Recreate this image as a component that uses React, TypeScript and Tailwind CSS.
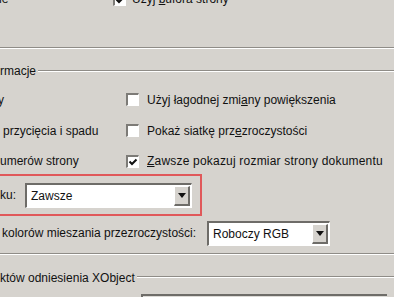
function Checkbox({ checked = false }: { checked?: boolean }) {
  return (
    <span className="relative flex h-[13px] w-[13px] shrink-0 border-t-[2px] border-l-[2px] border-b border-r border-t-[#7d7b77] border-l-[#7d7b77] border-b-white border-r-white bg-white">
      {checked && (
        <svg viewBox="0 0 10 10" className="absolute left-[0px] top-[0px] h-[10px] w-[10px]">
          <path d="M1.5 4.5 L4 7 L8.5 2.5" fill="none" stroke="#111" strokeWidth="2" />
        </svg>
      )}
    </span>
  );
}

function Select({ value, width }: { value: string; width: string }) {
  return (
    <div className={`flex h-[25px] ${width} shrink-0 items-stretch border-t-[2px] border-l-[2px] border-b border-r border-t-[#6e6c68] border-l-[#6e6c68] border-b-white border-r-white bg-white`}>
      <span className="flex flex-1 items-center pl-[4px] text-[12px] text-[#111]">{value}</span>
      <span className="my-[1px] mr-[1px] flex w-[16px] items-center justify-center border-t border-l border-b-[2px] border-r-[2px] border-t-white border-l-white border-b-[#6e6c68] border-r-[#6e6c68] bg-[#d6d3ce]">
        <svg viewBox="0 0 8 5" className="h-[5px] w-[8px]">
          <path d="M0 0 H8 L4 5 Z" fill="#111" />
        </svg>
      </span>
    </div>
  );
}

function Etched() {
  return (
    <div className="flex flex-col">
      <div className="h-px bg-[#8f8c87]" />
      <div className="h-px bg-white" />
    </div>
  );
}

export default function App() {
  return (
    <div
      className="relative h-[297px] w-[394px] overflow-hidden bg-[#d6d3ce] text-[12px] text-[#111]"
      style={{ fontFamily: '"Liberation Sans", Arial, sans-serif' }}
    >
      {/* top row of previous group */}
      <div className="-mt-[12px] flex h-[22px] items-center">
        <span className="-ml-[1px] w-[114px]">ie</span>
        <Checkbox checked />
        <span className="ml-[6px]">
          Użyj <span className="underline">b</span>ufora strony
        </span>
      </div>

      <div className="mt-[37px]">
        <Etched />
      </div>

      {/* group title */}
      <div className="mt-[15px] flex h-[14px] items-center">
        <span className="pr-[2px] leading-none">rmacje</span>
        <div className="flex-1">
          <Etched />
        </div>
      </div>

      {/* checkbox rows */}
      <div className="mt-[6px] flex flex-col">
        <div className="flex h-[31px] items-center">
          <span className="-ml-[2px] w-[128px]">y</span>
          <Checkbox />
          <span className="ml-[8px]">
            Użyj łagodnej zmi<span className="underline">a</span>ny powiększenia
          </span>
        </div>
        <div className="flex h-[31px] items-center">
          <span className="w-[126px] pl-[3px]">przycięcia i spadu</span>
          <Checkbox />
          <span className="ml-[8px]">
            Pokaż siatkę prz<span className="underline">e</span>zroczystości
          </span>
        </div>
        <div className="flex h-[30px] items-center">
          <span className="w-[126px]">umerów strony</span>
          <Checkbox checked />
          <span className="ml-[8px] tracking-[0.2px]">
            <span className="underline">Z</span>awsze pokazuj rozmiar strony dokumentu
          </span>
        </div>
      </div>

      {/* highlighted row */}
      <div className="-ml-[4px] -mt-[2px] flex h-[42px] w-[206px] items-center border-2 border-[#e0585a] pl-[2px]">
        <span className="w-[25px]">ku:</span>
        <Select value="Zawsze" width="w-[167px]" />
      </div>

      <div className="mt-[4px] flex h-[26px] items-center">
        <span className="w-[207px] pl-[2px]">kolorów mieszania przezroczystości:</span>
        <Select value="Roboczy RGB" width="w-[123px]" />
      </div>

      <div className="mt-[7px]">
        <Etched />
      </div>

      {/* next group */}
      <div className="mt-[16px] flex h-[14px] items-start">
        <span className="pr-[2px] leading-[14px]">któw odniesienia XObject</span>
        <div className="mt-[5px] flex-1">
          <Etched />
        </div>
      </div>

      <div className="ml-[141px] mt-[9px] h-[20px] w-[246px] border-t-2 border-l-2 border-[#6e6c68] bg-[#dcdad6]" />
    </div>
  );
}
